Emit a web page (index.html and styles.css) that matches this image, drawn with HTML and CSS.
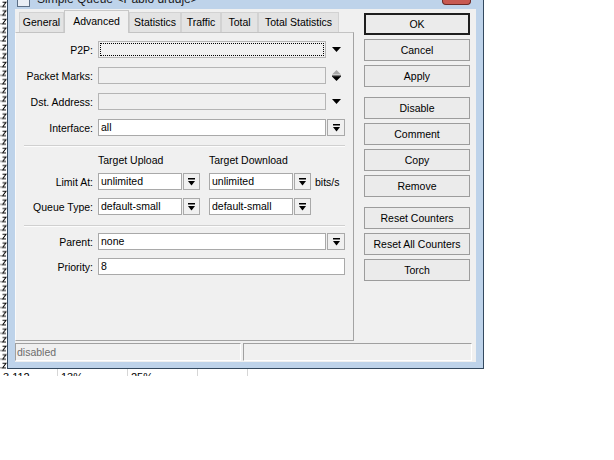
FILE: index.html
```html
<!DOCTYPE html>
<html>
<head>
<meta charset="utf-8">
<link rel="stylesheet" href="styles.css">
</head>
<body>
<div class="desktop">
  <svg class="bg-icons" width="7" height="369" viewBox="0 0 7 369">
    <defs>
      <pattern id="ico" width="7" height="8.6" patternUnits="userSpaceOnUse">
        <path d="M2.5 2.2H6L2.6 6.6H6" fill="none" stroke="#000" stroke-width="1"/>
        <rect x="0.5" y="6" width="1" height="1" fill="#000"/>
      </pattern>
    </defs>
    <rect width="7" height="369" fill="url(#ico)"/>
  </svg>
  <div class="bg-row">
    <span class="cell c1">3.112</span>
    <span class="cell c2">13%</span>
    <span class="cell c3">25%</span>
    <span class="cell c4"></span>
    <span class="cell c5"></span>
  </div>

  <div class="window">
    <div class="titlebar">
      <span class="ticon"></span>
      <span class="ttext">Simple Queue &lt;Pablo drudje&gt;</span>
      <span class="close"></span>
    </div>
    <div class="client">
      <div class="main">
        <div class="left">
          <div class="tabs">
            <span class="tab t1">General</span>
            <span class="tab t2 active">Advanced</span>
            <span class="tab t3">Statistics</span>
            <span class="tab t4">Traffic</span>
            <span class="tab t5">Total</span>
            <span class="tab t6">Total Statistics</span>
          </div>
          <div class="panel">
            <div class="row">
              <label class="lbl">P2P:</label>
              <span class="field wide disabled focus"></span>
              <span class="slot"><svg width="9" height="5" viewBox="0 0 9 5"><path d="M0 0H9L4.5 5Z" fill="#000"/></svg></span>
            </div>
            <div class="row">
              <label class="lbl">Packet Marks:</label>
              <span class="field wide disabled"></span>
              <span class="slot"><svg width="9" height="11" viewBox="0 0 9 11"><path d="M4.5 0L9 4.5H0Z" fill="#a8a8a8"/><rect x="0" y="5.5" width="9" height="1.2" fill="#000"/><path d="M0 6.5H9L4.5 11Z" fill="#000"/></svg></span>
            </div>
            <div class="row">
              <label class="lbl">Dst. Address:</label>
              <span class="field wide disabled"></span>
              <span class="slot"><svg width="9" height="5" viewBox="0 0 9 5"><path d="M0 0H9L4.5 5Z" fill="#000"/></svg></span>
            </div>
            <div class="row">
              <label class="lbl">Interface:</label>
              <span class="field wide">all</span>
              <span class="dbtn"><svg width="7" height="8" viewBox="0 0 7 8"><rect x="0" y="0" width="7" height="1.5" fill="#000"/><path d="M0 3H7L3.5 7.5Z" fill="#000"/></svg></span>
            </div>
            <div class="sep"></div>
            <div class="heads">
              <span class="head h1">Target Upload</span>
              <span class="head h2">Target Download</span>
            </div>
            <div class="row r-limit">
              <label class="lbl">Limit At:</label>
              <span class="field short">unlimited</span>
              <span class="dbtn small"><svg width="7" height="8" viewBox="0 0 7 8"><rect x="0" y="0" width="7" height="1.5" fill="#000"/><path d="M0 3H7L3.5 7.5Z" fill="#000"/></svg></span>
              <span class="field short second">unlimited</span>
              <span class="dbtn small"><svg width="7" height="8" viewBox="0 0 7 8"><rect x="0" y="0" width="7" height="1.5" fill="#000"/><path d="M0 3H7L3.5 7.5Z" fill="#000"/></svg></span>
              <span class="unit">bits/s</span>
            </div>
            <div class="row r-qt">
              <label class="lbl">Queue Type:</label>
              <span class="field short">default-small</span>
              <span class="dbtn small"><svg width="7" height="8" viewBox="0 0 7 8"><rect x="0" y="0" width="7" height="1.5" fill="#000"/><path d="M0 3H7L3.5 7.5Z" fill="#000"/></svg></span>
              <span class="field short second">default-small</span>
              <span class="dbtn small"><svg width="7" height="8" viewBox="0 0 7 8"><rect x="0" y="0" width="7" height="1.5" fill="#000"/><path d="M0 3H7L3.5 7.5Z" fill="#000"/></svg></span>
            </div>
            <div class="sep sep2"></div>
            <div class="row r-parent">
              <label class="lbl">Parent:</label>
              <span class="field wide">none</span>
              <span class="dbtn"><svg width="7" height="8" viewBox="0 0 7 8"><rect x="0" y="0" width="7" height="1.5" fill="#000"/><path d="M0 3H7L3.5 7.5Z" fill="#000"/></svg></span>
            </div>
            <div class="row">
              <label class="lbl">Priority:</label>
              <span class="field full">8</span>
            </div>
          </div>
        </div>
        <div class="buttons">
          <span class="btn default">OK</span>
          <span class="btn">Cancel</span>
          <span class="btn">Apply</span>
          <span class="btn group">Disable</span>
          <span class="btn">Comment</span>
          <span class="btn">Copy</span>
          <span class="btn">Remove</span>
          <span class="btn group">Reset Counters</span>
          <span class="btn">Reset All Counters</span>
          <span class="btn">Torch</span>
        </div>
      </div>
      <div class="status">
        <span class="sbox s1">disabled</span>
        <span class="sbox s2"></span>
      </div>
    </div>
  </div>
</div>
</body>
</html>
```

FILE: styles.css
```css
html, body {
  margin: 0;
  padding: 0;
  background: #ffffff;
}

body {
  font-family: "Liberation Sans", Arial, sans-serif;
  font-size: 10.5px;
  color: #000;
}

.desktop {
  position: relative;
  width: 614px;
  height: 460px;
  overflow: hidden;
  background: #fff;
}

.bg-icons {
  position: absolute;
  left: 0;
  top: 0;
  display: block;
}

.bg-row {
  position: absolute;
  left: 0;
  top: 369px;
  width: 486px;
  height: 7px;
  overflow: hidden;
  display: flex;
  background: #fff;
  font-size: 11px;
  line-height: 11px;
}

.cell {
  box-sizing: border-box;
  height: 7px;
  padding-top: 3px;
  border-right: 1px solid #d6d6d6;
  white-space: nowrap;
}

.c1 { width: 58px; padding-left: 3px; }
.c2 { width: 70px; padding-left: 3px; }
.c3 { width: 70px; padding-left: 3px; }
.c4 { width: 50px; }
.c5 { flex: 1; border-right: none; }

.window {
  position: absolute;
  left: 7px;
  top: -22px;
  width: 477px;
  height: 391px;
  box-sizing: border-box;
  border: 1px solid #34495f;
  background: #bed3ea;
  padding: 0 7px 6px 7px;
  display: flex;
  flex-direction: column;
}

.titlebar {
  position: relative;
  height: 30px;
  flex: none;
  display: flex;
  align-items: flex-start;
  padding-top: 13px;
  box-sizing: border-box;
}

.ticon {
  display: block;
  width: 13px;
  height: 12px;
  margin-left: 2px;
  margin-top: 3px;
  box-sizing: border-box;
  border: 1px solid #5c6f86;
  background: #e9eef5;
}

.ttext {
  margin-left: 7px;
  font-family: "Liberation Sans", Arial, sans-serif;
  font-size: 12px;
  line-height: 14px;
  color: #1a1a1a;
}

.close {
  position: absolute;
  left: 427px;
  top: 6px;
  width: 29px;
  height: 20px;
  box-sizing: border-box;
  background: #c85a52;
  border: 1px solid #6e2a26;
  border-top: none;
  border-radius: 0 0 4px 4px;
}

.client {
  flex: 1;
  background: #f0f0f0;
  padding-top: 1px;
  padding-bottom: 1px;
  box-sizing: border-box;
  display: flex;
  flex-direction: column;
}

.main {
  display: grid;
  grid-template-columns: 339px 106px;
  column-gap: 10px;
  align-items: start;
}

.left {
  display: flex;
  flex-direction: column;
}

.tabs {
  display: flex;
  align-items: flex-end;
  height: 22px;
  padding-left: 4px;
  position: relative;
  z-index: 2;
}

.tab {
  box-sizing: border-box;
  height: 20px;
  line-height: 19px;
  text-align: center;
  background: #e3e3e3;
  border: 1px solid #d2d2d2;
  border-bottom: none;
  white-space: nowrap;
}

.tab.active {
  height: 23px;
  line-height: 20px;
  background: #f0f0f0;
  border-color: #c8c8c8;
  margin-bottom: -1px;
}

.t1 { width: 45px; }
.t2 { width: 65px; }
.t3 { width: 52px; }
.t4 { width: 40px; }
.t5 { width: 37px; }
.t6 { width: 81px; }

.panel {
  box-sizing: border-box;
  height: 309px;
  border-top: 1px solid #c3c3c3;
  border-left: 1px solid #fafafa;
  border-right: 1px solid #a3a3a3;
  border-bottom: 1px solid #a3a3a3;
  padding: 8px 8px 0 0;
  display: flex;
  flex-direction: column;
}

.row {
  display: flex;
  align-items: center;
  height: 17px;
  margin-bottom: 9px;
}

.lbl {
  width: 77px;
  flex: none;
  text-align: right;
  margin-right: 5px;
  white-space: nowrap;
}

.field {
  box-sizing: border-box;
  height: 17px;
  line-height: 15px;
  padding-left: 2px;
  background: #fff;
  border: 1px solid #a9a9a9;
  white-space: nowrap;
  overflow: hidden;
  flex: none;
}

.field.wide { width: 228px; }
.field.full { width: 247px; }
.field.short { width: 84px; }
.field.second { margin-left: 9px; }

.field.disabled {
  background: #f0f0f0;
  border-color: #b5b5b5;
}

.field.focus {
  outline: 1px dotted #000;
  outline-offset: -3px;
}

.slot {
  width: 18px;
  height: 17px;
  margin-left: 1px;
  display: flex;
  align-items: center;
  justify-content: center;
  flex: none;
}

.dbtn {
  box-sizing: border-box;
  width: 18px;
  height: 17px;
  margin-left: 1px;
  border: 1px solid #a9a9a9;
  background: #f0f0f0;
  display: flex;
  align-items: center;
  justify-content: center;
  flex: none;
}

.dbtn.small { width: 17px; }

.dbtn svg, .slot svg { display: block; }

.unit {
  margin-left: 4px;
  white-space: nowrap;
}

.sep {
  height: 0;
  margin: 0 0 0 8px;
  border-top: 1px solid #d0d0d0;
  border-bottom: 1px solid #fcfcfc;
}

.sep2 {
  margin-top: 1px;
}

.heads {
  display: flex;
  height: 14px;
  line-height: 14px;
  margin-top: 6px;
  margin-bottom: 6px;
  padding-left: 82px;
}

.head { white-space: nowrap; }
.h1 { width: 111px; }

.r-limit { margin-bottom: 8px; }
.r-qt { margin-bottom: 9px; }
.r-parent { margin-bottom: 8px; }
.sep2 + .row { margin-top: 6px; }

.buttons {
  display: flex;
  flex-direction: column;
  padding-top: 3px;
}

.btn {
  box-sizing: border-box;
  height: 22px;
  line-height: 20px;
  margin-bottom: 4px;
  text-align: center;
  background: #ebebeb;
  border: 1px solid #9c9c9c;
  white-space: nowrap;
}

.btn.default {
  border: 2px solid #1e1e1e;
  line-height: 18px;
}

.btn.group { margin-top: 6px; }

.status {
  display: flex;
  margin-top: 2px;
  gap: 2px;
}

.sbox {
  box-sizing: border-box;
  height: 18px;
  line-height: 16px;
  padding-left: 1px;
  color: #6d6d6d;
  border-top: 1px solid #a0a0a0;
  border-left: 1px solid #a0a0a0;
  border-right: 1px solid #ffffff;
  border-bottom: 1px solid #ffffff;
}

.s1 { width: 226px; }
.s2 { width: 229px; }
```
